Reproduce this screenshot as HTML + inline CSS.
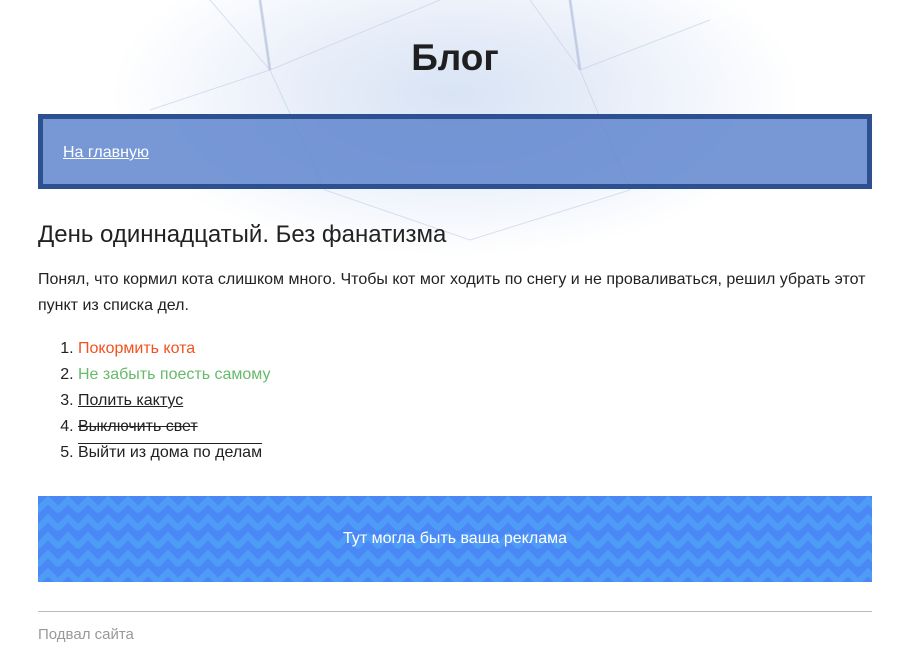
<!DOCTYPE html>
<html><head><meta charset="utf-8"><style>
body{margin:0;width:910px;height:662px;overflow:hidden;background:#fff;font-family:"Liberation Sans",Arial,sans-serif;color:#222;position:relative}
.bg{position:absolute;left:110px;top:0;width:690px;height:270px;background:radial-gradient(ellipse 50% 60% at 50% 35%,#d8e3f4 0%,#e8eef9 45%,rgba(255,255,255,0) 100%)}
.bg svg{position:absolute;left:0;top:0}
h1{position:absolute;left:0;width:910px;top:37px;margin:0;text-align:center;font-size:37px;font-weight:bold;color:#1f1f1f}
.nav{position:absolute;left:38px;top:114px;width:824px;height:65px;border:5px solid #2c5090;background:rgba(100,137,207,.88)}
.nav a{position:absolute;left:20px;top:25px;color:#fff;font-size:16px;text-decoration:underline}
h2{position:absolute;left:38px;top:221px;margin:0;font-weight:normal;font-size:24px;color:#222}
p{position:absolute;left:38px;top:267px;margin:0;width:840px;font-size:16px;line-height:26px}
ol{position:absolute;left:38px;top:336px;margin:0;padding-left:40px;font-size:16px;line-height:26px}
.ad{position:absolute;left:38px;top:496px;width:834px;height:86px;background:#4a88f5;color:#fff;font-size:16px;text-align:center;line-height:86px;overflow:hidden}
.ad svg{position:absolute;left:0;top:0}
.ad span{position:relative}
hr{position:absolute;left:38px;top:611px;width:834px;margin:0;border:0;border-top:1px solid #bbb}
.f{position:absolute;left:38px;top:626px;color:#999;font-size:15px}
</style></head><body>
<div class="bg"><svg width="690" height="270"><g stroke="#c2cee4" stroke-width="1" fill="none" opacity=".6"><path d="M150 0 L160 70 L215 190"/><path d="M460 0 L470 70 L520 190"/><path d="M160 70 L330 0"/><path d="M160 70 L40 110"/><path d="M470 70 L600 20"/><path d="M215 190 L360 240 L520 190"/><path d="M100 0 L160 70"/><path d="M420 0 L470 70"/></g><g stroke="#9fb0d0" stroke-width="3" opacity=".4"><path d="M150 0 L160 70"/><path d="M460 0 L470 70"/></g></svg></div>
<h1>Блог</h1>
<div class="nav"><a>На главную</a></div>
<h2>День одиннадцатый. Без фанатизма</h2>
<p>Понял, что кормил кота слишком много. Чтобы кот мог ходить по снегу и не проваливаться, решил убрать этот пункт из списка дел.</p>
<ol>
<li><span style="color:#f4511e">Покормить кота</span></li>
<li><span style="color:#66bb6a">Не забыть поесть самому</span></li>
<li><span style="text-decoration:underline">Полить кактус</span></li>
<li><span style="text-decoration:line-through">Выключить свет</span></li>
<li><span style="text-decoration:overline">Выйти из дома по делам</span></li>
</ol>
<div class="ad"><svg width="834" height="86"><defs><pattern id="z" width="20" height="18" patternUnits="userSpaceOnUse"><path d="M-1 15 L10 4 L21 15" stroke="#4f9cf7" stroke-width="6" fill="none"/><path d="M-1 33 L10 22 L21 33" stroke="#4f9cf7" stroke-width="6" fill="none"/><path d="M-1 -3 L10 -14 L21 -3" stroke="#4f9cf7" stroke-width="6" fill="none"/></pattern></defs><rect width="834" height="86" fill="url(#z)"/></svg><span>Тут могла быть ваша реклама</span></div>
<hr>
<div class="f">Подвал сайта</div>
</body></html>
